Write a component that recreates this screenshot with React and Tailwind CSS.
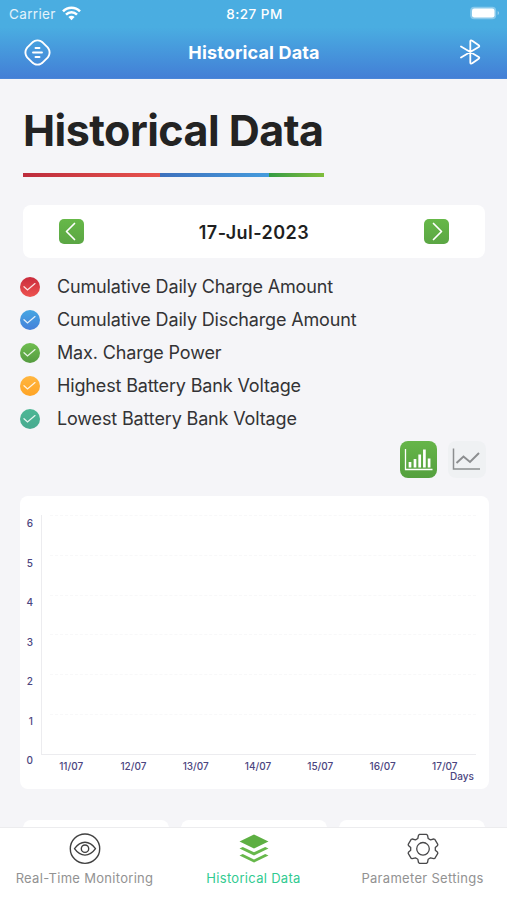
import React, { useState } from 'react';

const series = [
  { id: 'charge', label: 'Cumulative Daily Charge Amount', from: '#c92b3c', to: '#ee5350' },
  { id: 'discharge', label: 'Cumulative Daily Discharge Amount', from: '#45a6e2', to: '#4580da' },
  { id: 'power', label: 'Max. Charge Power', from: '#6fbd50', to: '#559b40' },
  { id: 'highest', label: 'Highest Battery Bank Voltage', from: '#ffb640', to: '#ffa425' },
  { id: 'lowest', label: 'Lowest Battery Bank Voltage', from: '#4db795', to: '#48aa90' },
];

const days = ['11/07', '12/07', '13/07', '14/07', '15/07', '16/07', '17/07'];
const levels = [6, 5, 4, 3, 2, 1];

const StatusBar = () => (
  <div className="flex h-7 items-center justify-between pl-[9px] pr-[7px] text-[13.5px] text-white">
    <div className="flex w-[120px] items-center gap-[6px] text-white/85">
      <span className="tracking-[0.35px]">Carrier</span>
      <svg width="19" height="15" viewBox="0 0 19 15" fill="none" stroke="#fff" strokeWidth="2.6" className="-mt-0.5">
        <path d="M1 5.4C5.8.6 13.2.6 18 5.4" />
        <path d="M4 8.6c3.2-3.1 7.8-3.1 11 0" />
        <path d="M9.5 14.2 6.4 11.1c1.800-1.700 4.400-1.700 6.200 0z" fill="#fff" stroke="none" />
      </svg>
    </div>
    <span className="pt-px text-[13.5px] font-medium tracking-[0.5px]">8:27 PM</span>
    <div className="flex w-[120px] justify-end">
      <svg width="31" height="14" viewBox="0 0 31 14" className="-mt-0.5">
        <rect x="1.2" y=".7" width="26" height="12.6" rx="4" fill="#fff" fillOpacity=".35" />
        <rect x="3" y="2.4" width="22.5" height="9.2" rx="2.4" fill="#fff" />
        <path d="M28.7 5v4c1.6-.6 1.6-3.4 0-4z" fill="#fff" fillOpacity=".5" />
      </svg>
    </div>
  </div>
);

const Header = () => (
  <header className="h-[79px] shrink-0 border-b border-[#4a86d8] bg-linear-to-b from-[#4aade1] from-35% to-[#437fd6]">
    <StatusBar />
    <div className="flex h-[49px] items-center justify-between pl-6 pr-[26px]">
      <svg width="27" height="27" viewBox="0 0 27 27" fill="none" stroke="#fff" strokeWidth="1.9" strokeLinecap="round">
        <path d="M10.2 2.2c2.100-1 4.500-1 6.600 0l1.500.9 5.600 5.600.9 1.500c1 2.100 1 4.500 0 6.600l-.9 1.500-5.600 5.600-1.500.9c-2.100 1-4.500 1-6.600 0l-1.500-.9-5.600-5.600-.9-1.500c-1-2.100-1-4.500 0-6.600l.9-1.500 5.600-5.600z" strokeLinejoin="round" />
        <path d="M11.500 9h4M9 13.500h9M11.500 18h4" />
      </svg>
      <h2 className="mr-[3px] text-[18px] font-bold leading-none tracking-[0.150px] text-white">Historical Data</h2>
      <svg width="21" height="26" viewBox="0 0 21 26" fill="none" stroke="#fff" strokeWidth="1.8" strokeLinecap="round" strokeLinejoin="round" className="-mt-0.5">
        <path d="M1 7.500 18.700 18c.8.500.8 1.100 0 1.700l-6.500 4.600c-1 .6-1.900.3-1.900-.8V2.500c0-1.100.9-1.400 1.900-.8l6.500 4.600c.8.600.8 1.200 0 1.700L1 18.500" />
      </svg>
    </div>
  </header>
);

const DateButton = ({ d, onClick, label }) => (
  <button
    onClick={onClick}
    aria-label={label}
    className="flex h-[25px] w-[25px] items-center justify-center rounded-[5px] bg-linear-to-b from-[#66b848] to-[#5ba644]"
  >
    <svg width="25" height="25" viewBox="0 0 25 25" fill="none" stroke="#fff" strokeWidth="1.700" strokeLinecap="round" strokeLinejoin="round">
      <path d={d} />
    </svg>
  </button>
);

const LegendRow = ({ item, checked, onToggle }) => (
  <button onClick={onToggle} className="flex h-[33px] items-center gap-[17px] text-left">
    <svg width="20" height="20" viewBox="0 0 20 20">
      <defs>
        <linearGradient id={item.id} x1="0" y1="0" x2="0" y2="1">
          <stop offset="0" stopColor={item.from} />
          <stop offset="1" stopColor={item.to} />
        </linearGradient>
      </defs>
      <circle cx="10" cy="10" r="10" fill={`url(#${item.id})`} />
      {checked && (
        <path d="m4 9.800 3.500 3.200 7.500-6.400" fill="none" stroke="#fff" strokeOpacity=".85" strokeWidth="1.300" strokeLinecap="round" />
      )}
    </svg>
    <span className="pt-px text-[18px] leading-none tracking-[-0.150px] text-[#333335]">{item.label}</span>
  </button>
);

const Chart = () => (
  <div className="ml-5 mr-[18px] mt-[18px] flex h-[293px] flex-col rounded-lg bg-white pl-[4px] text-[10px] text-[#4b4580]">
    <div className="flex h-[259px] pt-[19px]">
      <div className="flex w-[17px] shrink-0 flex-col pr-[8px] pt-px">
        {[...levels, 0].map((n) => (
          <span key={n} className="h-[39.500px] shrink-0 text-right font-medium leading-[15px]">{n}</span>
        ))}
      </div>
      <div className="mr-[13px] flex grow flex-col border-b border-l border-[#ececef]">
        {levels.map((n) => (
          <div key={n} className="ml-[8px] grow border-t border-dashed border-[#f8f8f9]" />
        ))}
      </div>
    </div>
    <div className="ml-[16px] mr-[13px] flex pt-[6px]">
      {days.map((day) => (
        <span key={day} className="grow basis-0 text-center font-medium leading-[11px]">{day}</span>
      ))}
    </div>
    <span className="-mt-px pr-[15px] text-right font-medium leading-[10px]">Days</span>
  </div>
);

const EyeIcon = () => (
  <svg width="32" height="32" viewBox="0 0 32 32" fill="none" stroke="#414141" strokeWidth="1.400">
    <circle cx="16" cy="15.700" r="14.700" />
    <path d="M5.500 15.700C8 12.200 12 9.300 16 9.300s8 2.900 10.500 6.400C24 19.200 20 22.100 16 22.100s-8-2.900-10.500-6.400z" strokeLinejoin="round" />
    <circle cx="16" cy="15.700" r="3.700" />
  </svg>
);

const LayersIcon = () => (
  <svg width="32" height="32" viewBox="0 0 32 32">
    <path d="M16 1.500 30.500 8.500 16 15.500 1.500 8.500z" fill="#5daf42" />
    <path d="m1.500 15.500 3.300-1.600L16 19.300l11.200-5.400 3.300 1.600L16 22.500z" fill="#67b84b" />
    <path d="m1.500 22.600 3.300-1.600L16 26.400 27.200 21l3.300 1.600L16 29.600z" fill="#67b84b" />
  </svg>
);

const GearIcon = () => (
  <svg width="32" height="32" viewBox="0 0 32 32" fill="none" stroke="#48484a" strokeWidth="1.300" strokeLinejoin="round">
    <path d="M12.400 1.400h7.200l.9.800.7 3.300 2.300 1.400 3.300-.9 1 .4 3 5-.2 1-2.300 2.100v2.700l2.300 2.100.2 1-3 5-1 .4-3.300-.9-2.300 1.400-.7 3.300-.9.800h-7.200l-.9-.8-.7-3.300-2.300-1.400-3.300.9-1-.4-3-5 .2-1 2.300-2.100v-2.700l-2.300-2.100-.2-1 3-5 1-.4 3.300.9 2.300-1.400.7-3.300z" />
    <circle cx="16" cy="15.800" r="6.300" />
  </svg>
);

const tabs = [
  { id: 'monitoring', label: 'Real-Time Monitoring', Icon: EyeIcon },
  { id: 'history', label: 'Historical Data', Icon: LayersIcon },
  { id: 'settings', label: 'Parameter Settings', Icon: GearIcon },
];

const App = () => {
  const [date, setDate] = useState(new Date(2023, 6, 17));
  const [view, setView] = useState('bar');
  const [hidden, setHidden] = useState([]);

  const moveDay = (step) => {
    setDate((prev) => new Date(prev.getFullYear(), prev.getMonth(), prev.getDate() + step));
  };

  const toggle = (id) => {
    setHidden((prev) => (prev.includes(id) ? prev.filter((x) => x !== id) : [...prev, id]));
  };

  const month = date.toLocaleString('en-US', { month: 'short' });

  return (
    <div className="flex h-[900px] w-[507px] flex-col overflow-hidden bg-[#f5f5f8] font-['Inter',sans-serif]">
      <Header />

      <main className="flex min-h-0 grow flex-col overflow-hidden">
        <h1 className="ml-[23px] mt-[28px] whitespace-nowrap text-[43px] font-bold leading-[46px] tracking-[-0.530px] text-[#232323]">
          Historical Data
        </h1>
        <div className="ml-[23px] mt-[20px] flex h-[4px] w-[301px] shrink-0">
          <div className="w-[137px] bg-linear-to-r from-[#bd2c3c] to-[#e8534e]" />
          <div className="w-[109px] bg-linear-to-r from-[#3d70bd] to-[#459bdd]" />
          <div className="w-[55px] bg-linear-to-r from-[#329c43] to-[#7fbd3c]" />
        </div>

        <div className="ml-[23px] mr-[22px] mt-[28px] flex h-[53px] shrink-0 items-center justify-between rounded-lg bg-white px-9">
          <DateButton d="m15.500 4.500-8 8 8 8" onClick={() => moveDay(-1)} label="Previous day" />
          <span className="pt-px text-[18px] font-semibold tracking-[0.450px] text-[#1f1f21]">
            {date.getDate()}-{month}-{date.getFullYear()}
          </span>
          <DateButton d="m9.500 4.500 8 8-8 8" onClick={() => moveDay(1)} label="Next day" />
        </div>

        <div className="ml-5 mt-[12px] flex shrink-0 flex-col">
          {series.map((item) => (
            <LegendRow key={item.id} item={item} checked={!hidden.includes(item.id)} onToggle={() => toggle(item.id)} />
          ))}
        </div>

        <div className="mr-[21px] mt-[6px] flex shrink-0 justify-end gap-[11px]">
          <button
            onClick={() => setView('bar')}
            aria-label="Bar chart"
            className={`rounded-lg ${view === 'bar' ? 'bg-linear-to-b from-[#66b549] to-[#54a03e] text-white' : 'bg-[#eff1f3] text-[#8c8e90]'}`}
          >
            <svg width="37" height="37" viewBox="0 0 37 37" fill="none" stroke="currentColor">
              <path d="M5.500 8v20.500h27" strokeWidth="1.300" />
              <path d="M10 26.500V21M15 26.500V18M19.700 26.500V13.500M24.400 26.500V8.500M29.100 26.500V17.500" strokeWidth="2.700" />
            </svg>
          </button>
          <button
            onClick={() => setView('line')}
            aria-label="Line chart"
            className={`rounded-lg ${view === 'line' ? 'bg-linear-to-b from-[#66b549] to-[#54a03e] text-white' : 'bg-[#eff1f3] text-[#8c8e90]'}`}
          >
            <svg width="38" height="37" viewBox="0 0 38 37" fill="none" stroke="currentColor">
              <path d="M5.500 7.500V28h26.500" strokeWidth="1.500" />
              <path d="m8.500 22 7-6.500 6.500 5.500 9-9" strokeWidth="2" />
            </svg>
          </button>
        </div>

        <div className="shrink-0">
          <Chart />
        </div>

        <div className="ml-[23px] mr-[22px] mt-[31px] flex shrink-0 gap-[12px]">
          <div className="h-20 grow rounded-lg bg-white" />
          <div className="h-20 grow rounded-lg bg-white" />
          <div className="h-20 grow rounded-lg bg-white" />
        </div>
      </main>

      <nav className="flex h-[73px] shrink-0 border-t border-[#ececee] bg-white">
        {tabs.map(({ id, label, Icon }) => (
          <button
            key={id}
            className={`flex grow basis-0 flex-col items-center pt-[5px] text-[13px] tracking-[0.300px] ${id === 'history' ? 'text-[#31cb91]' : 'text-[#929292]'}`}
          >
            <Icon />
            <span className="mt-[3px] whitespace-nowrap leading-[20px]">{label}</span>
          </button>
        ))}
      </nav>
    </div>
  );
};

export default App;
